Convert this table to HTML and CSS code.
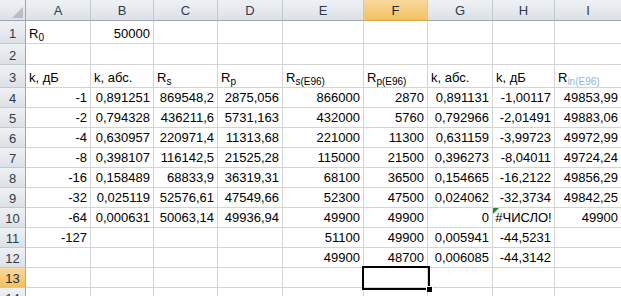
FILE: index.html
```html
<!DOCTYPE html>
<html lang="ru">
<head>
    <meta charset="UTF-8">
    <title>Лист1</title>
    <link rel="stylesheet" href="styles.css">
</head>
<body>

<div class="sheet">
    <!-- заголовки столбцов -->
    <div class="corner"><span class="corner-mark"></span></div>
    <div class="col-head">A</div>
    <div class="col-head">B</div>
    <div class="col-head">C</div>
    <div class="col-head">D</div>
    <div class="col-head">E</div>
    <div class="col-head active">F</div>
    <div class="col-head">G</div>
    <div class="col-head">H</div>
    <div class="col-head">I</div>

    <!-- 1 -->
    <div class="row-head">1</div>
    <div class="cell"><span>R<span class="sub">0</span></span></div>
    <div class="cell num">50000</div>
    <div class="cell"></div><div class="cell"></div><div class="cell"></div><div class="cell"></div>
    <div class="cell"></div><div class="cell"></div><div class="cell"></div>

    <!-- 2 -->
    <div class="row-head">2</div>
    <div class="cell"></div><div class="cell"></div><div class="cell"></div><div class="cell"></div>
    <div class="cell"></div><div class="cell"></div><div class="cell"></div><div class="cell"></div><div class="cell"></div>

    <!-- 3 -->
    <div class="row-head">3</div>
    <div class="cell">k, дБ</div>
    <div class="cell">k, абс.</div>
    <div class="cell"><span>R<span class="sub">s</span></span></div>
    <div class="cell"><span>R<span class="sub">p</span></span></div>
    <div class="cell"><span>R<span class="sub">s(E96)</span></span></div>
    <div class="cell"><span>R<span class="sub">p(E96)</span></span></div>
    <div class="cell">k, абс.</div>
    <div class="cell">k, дБ</div>
    <div class="cell"><span>R<span class="sub light">in(E96)</span></span></div>

    <!-- 4 -->
    <div class="row-head">4</div>
    <div class="cell num">-1</div>
    <div class="cell num">0,891251</div>
    <div class="cell num">869548,2</div>
    <div class="cell num">2875,056</div>
    <div class="cell num">866000</div>
    <div class="cell num">2870</div>
    <div class="cell num">0,891131</div>
    <div class="cell num">-1,00117</div>
    <div class="cell num">49853,99</div>

    <!-- 5 -->
    <div class="row-head">5</div>
    <div class="cell num">-2</div>
    <div class="cell num">0,794328</div>
    <div class="cell num">436211,6</div>
    <div class="cell num">5731,163</div>
    <div class="cell num">432000</div>
    <div class="cell num">5760</div>
    <div class="cell num">0,792966</div>
    <div class="cell num">-2,01491</div>
    <div class="cell num">49883,06</div>

    <!-- 6 -->
    <div class="row-head">6</div>
    <div class="cell num">-4</div>
    <div class="cell num">0,630957</div>
    <div class="cell num">220971,4</div>
    <div class="cell num">11313,68</div>
    <div class="cell num">221000</div>
    <div class="cell num">11300</div>
    <div class="cell num">0,631159</div>
    <div class="cell num">-3,99723</div>
    <div class="cell num">49972,99</div>

    <!-- 7 -->
    <div class="row-head">7</div>
    <div class="cell num">-8</div>
    <div class="cell num">0,398107</div>
    <div class="cell num">116142,5</div>
    <div class="cell num">21525,28</div>
    <div class="cell num">115000</div>
    <div class="cell num">21500</div>
    <div class="cell num">0,396273</div>
    <div class="cell num">-8,04011</div>
    <div class="cell num">49724,24</div>

    <!-- 8 -->
    <div class="row-head">8</div>
    <div class="cell num">-16</div>
    <div class="cell num">0,158489</div>
    <div class="cell num">68833,9</div>
    <div class="cell num">36319,31</div>
    <div class="cell num">68100</div>
    <div class="cell num">36500</div>
    <div class="cell num">0,154665</div>
    <div class="cell num">-16,2122</div>
    <div class="cell num">49856,29</div>

    <!-- 9 -->
    <div class="row-head">9</div>
    <div class="cell num">-32</div>
    <div class="cell num">0,025119</div>
    <div class="cell num">52576,61</div>
    <div class="cell num">47549,66</div>
    <div class="cell num">52300</div>
    <div class="cell num">47500</div>
    <div class="cell num">0,024062</div>
    <div class="cell num">-32,3734</div>
    <div class="cell num">49842,25</div>

    <!-- 10 -->
    <div class="row-head">10</div>
    <div class="cell num">-64</div>
    <div class="cell num">0,000631</div>
    <div class="cell num">50063,14</div>
    <div class="cell num">49936,94</div>
    <div class="cell num">49900</div>
    <div class="cell num">49900</div>
    <div class="cell num">0</div>
    <div class="cell error"><span class="err-mark"></span>#ЧИСЛО!</div>
    <div class="cell num">49900</div>

    <!-- 11 -->
    <div class="row-head">11</div>
    <div class="cell num">-127</div>
    <div class="cell"></div><div class="cell"></div><div class="cell"></div>
    <div class="cell num">51100</div>
    <div class="cell num">49900</div>
    <div class="cell num">0,005941</div>
    <div class="cell num">-44,5231</div>
    <div class="cell"></div>

    <!-- 12 -->
    <div class="row-head">12</div>
    <div class="cell"></div><div class="cell"></div><div class="cell"></div><div class="cell"></div>
    <div class="cell num">49900</div>
    <div class="cell num">48700</div>
    <div class="cell num">0,006085</div>
    <div class="cell num">-44,3142</div>
    <div class="cell"></div>

    <!-- 13 -->
    <div class="row-head active">13</div>
    <div class="cell"></div><div class="cell"></div><div class="cell"></div><div class="cell"></div><div class="cell"></div>
    <div class="cell"><span class="cursor"><span class="cursor-handle"></span></span></div>
    <div class="cell"></div><div class="cell"></div><div class="cell"></div>

    <!-- 14 -->
    <div class="row-head">14</div>
    <div class="cell"></div><div class="cell"></div><div class="cell"></div><div class="cell"></div>
    <div class="cell"></div><div class="cell"></div><div class="cell"></div><div class="cell"></div><div class="cell"></div>
</div>

</body>
</html>
```

FILE: styles.css
```css
body {
    margin: 0;
    padding: 0;
    background-color: #fff;
    font-family: "Liberation Sans", Arial, sans-serif;
    font-size: 13px;
    color: #000;
    overflow: hidden;
}

.sheet {
    display: grid;
    grid-template-columns: 26px 65px 63px 64px 65px 81px 64px 65px 62px 67px;
    grid-template-rows: 21px 23px 21px 23px repeat(11, 20px);
}

.cell {
    position: relative;
    display: flex;
    align-items: flex-end;
    box-sizing: border-box;
    padding: 0 3px 2px 3px;
    border-right: 1px solid #d4d4d4;
    border-bottom: 1px solid #d4d4d4;
    line-height: 15px;
    white-space: nowrap;
}

.num {
    justify-content: flex-end;
}

.error {
    justify-content: center;
}

.sub {
    font-size: 10px;
    line-height: 0;
    vertical-align: -3px;
}

.light {
    color: #8db4e2;
}

.corner,
.col-head,
.row-head {
    display: flex;
    align-items: center;
    justify-content: center;
    box-sizing: border-box;
    background: linear-gradient(#eef1f4, #dde1e7);
    color: #2e3b4d;
    font-size: 13px;
}

.corner {
    position: relative;
    border-right: 1px solid #9ea6b0;
    border-bottom: 1px solid #9ea6b0;
}

.corner-mark {
    position: absolute;
    right: 2px;
    bottom: 2px;
    width: 0;
    height: 0;
    border-left: 11px solid transparent;
    border-bottom: 11px solid #b9bec5;
}

.col-head {
    border-right: 1px solid #c2c8d0;
    border-bottom: 1px solid #9ea6b0;
    padding-top: 1px;
}

.row-head {
    border-right: 1px solid #9ea6b0;
    border-bottom: 1px solid #c2c8d0;
    padding-top: 2px;
}

.col-head.active,
.row-head.active {
    background: linear-gradient(#f9d99f, #f1c15f);
    color: #1f2a38;
}

.col-head.active {
    border-bottom-color: #d9a441;
}

.row-head.active {
    border-right-color: #d9a441;
}

.err-mark {
    position: absolute;
    top: 0;
    left: 0;
    width: 0;
    height: 0;
    border-top: 6px solid #1e8c2d;
    border-right: 6px solid transparent;
}

.cursor {
    position: absolute;
    left: -2px;
    top: -2px;
    right: -3px;
    bottom: -3px;
    border: 2px solid #000;
    z-index: 2;
}

.cursor-handle {
    position: absolute;
    right: -5px;
    bottom: -5px;
    width: 5px;
    height: 5px;
    background-color: #000;
    border: 1px solid #fff;
}
```
